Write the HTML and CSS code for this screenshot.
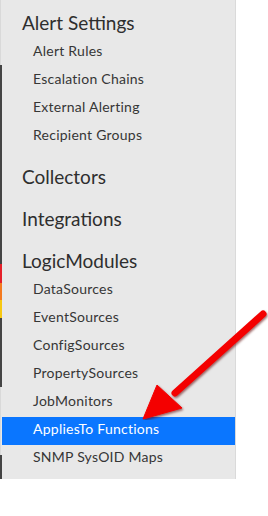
FILE: index.html
```html
<!DOCTYPE html>
<html>
<head>
<meta charset="utf-8">
<link rel="stylesheet" href="styles.css">
</head>
<body>
<div class="stage">
  <div class="panel">
    <div class="edge">
      <span class="seg seg-light" style="height:65px"></span>
      <span class="seg seg-dark" style="height:199px"></span>
      <span class="seg seg-red" style="height:19px"></span>
      <span class="seg seg-orange" style="height:17px"></span>
      <span class="seg seg-yellow" style="height:18px"></span>
      <span class="seg seg-dark" style="height:69px"></span>
      <span class="seg seg-light" style="height:68px"></span>
      <span class="seg seg-dark" style="height:24px"></span>
    </div>
    <nav class="menu">
      <div class="heading first">Alert Settings</div>
      <div class="item">Alert Rules</div>
      <div class="item">Escalation Chains</div>
      <div class="item">External Alerting</div>
      <div class="item">Recipient Groups</div>
      <div class="heading">Collectors</div>
      <div class="heading">Integrations</div>
      <div class="heading">LogicModules</div>
      <div class="item">DataSources</div>
      <div class="item">EventSources</div>
      <div class="item">ConfigSources</div>
      <div class="item">PropertySources</div>
      <div class="item">JobMonitors</div>
      <div class="item active">AppliesTo Functions</div>
      <div class="item">SNMP SysOID Maps</div>
    </nav>
  </div>
  <svg class="arrow" width="140" height="120" viewBox="0 0 140 120">
    <defs>
      <filter id="sh" x="-20%" y="-20%" width="140%" height="140%">
        <feDropShadow dx="1" dy="1.5" stdDeviation="1.2" flood-color="#5a0000" flood-opacity="0.6"/>
      </filter>
    </defs>
    <g filter="url(#sh)">
      <line x1="124" y1="14" x2="36" y2="93" stroke="#f40000" stroke-width="7" stroke-linecap="round"/>
      <polygon points="18,85 4,119 43,108" fill="#f40000" stroke="#f40000" stroke-width="1" stroke-linejoin="round"/>
    </g>
  </svg>
</div>
</body>
</html>
```
FILE: styles.css
```css
html, body {
  margin: 0;
  padding: 0;
  background: #ffffff;
}

.stage {
  position: relative;
  width: 268px;
  height: 516px;
}

.panel {
  display: flex;
  width: 236px;
  height: 479px;
  background: #e8e8e8;
  border-right: 1px solid #dadada;
  box-sizing: border-box;
}

.edge {
  display: flex;
  flex-direction: column;
  width: 2px;
  flex: none;
}

.seg { display: block; width: 2px; }
.seg-light { background: #d9d9d9; width: 1px; }
.seg-dark { background: #444444; }
.seg-red { background: #e5202a; }
.seg-orange { background: #f47a1f; }
.seg-yellow { background: #f7c811; }

.menu {
  flex: 1;
  display: flex;
  flex-direction: column;
  font-family: Lato, "Noto Sans", sans-serif;
  color: #333333;
}

.heading {
  font-size: 19px;
  line-height: 28px;
  padding: 12px 0 2px 20px;
  color: #2e2e2e;
}

.heading.first {
  padding-top: 9px;
  padding-bottom: 2px;
}

.item {
  font-size: 14px;
  line-height: 24px;
  letter-spacing: 0.25px;
  padding: 0 0 4px 31px;
  color: #363636;
}

.item.active {
  background: #0a76ff;
  color: #ffffff;
}

.arrow {
  position: absolute;
  left: 139px;
  top: 300px;
}
```
